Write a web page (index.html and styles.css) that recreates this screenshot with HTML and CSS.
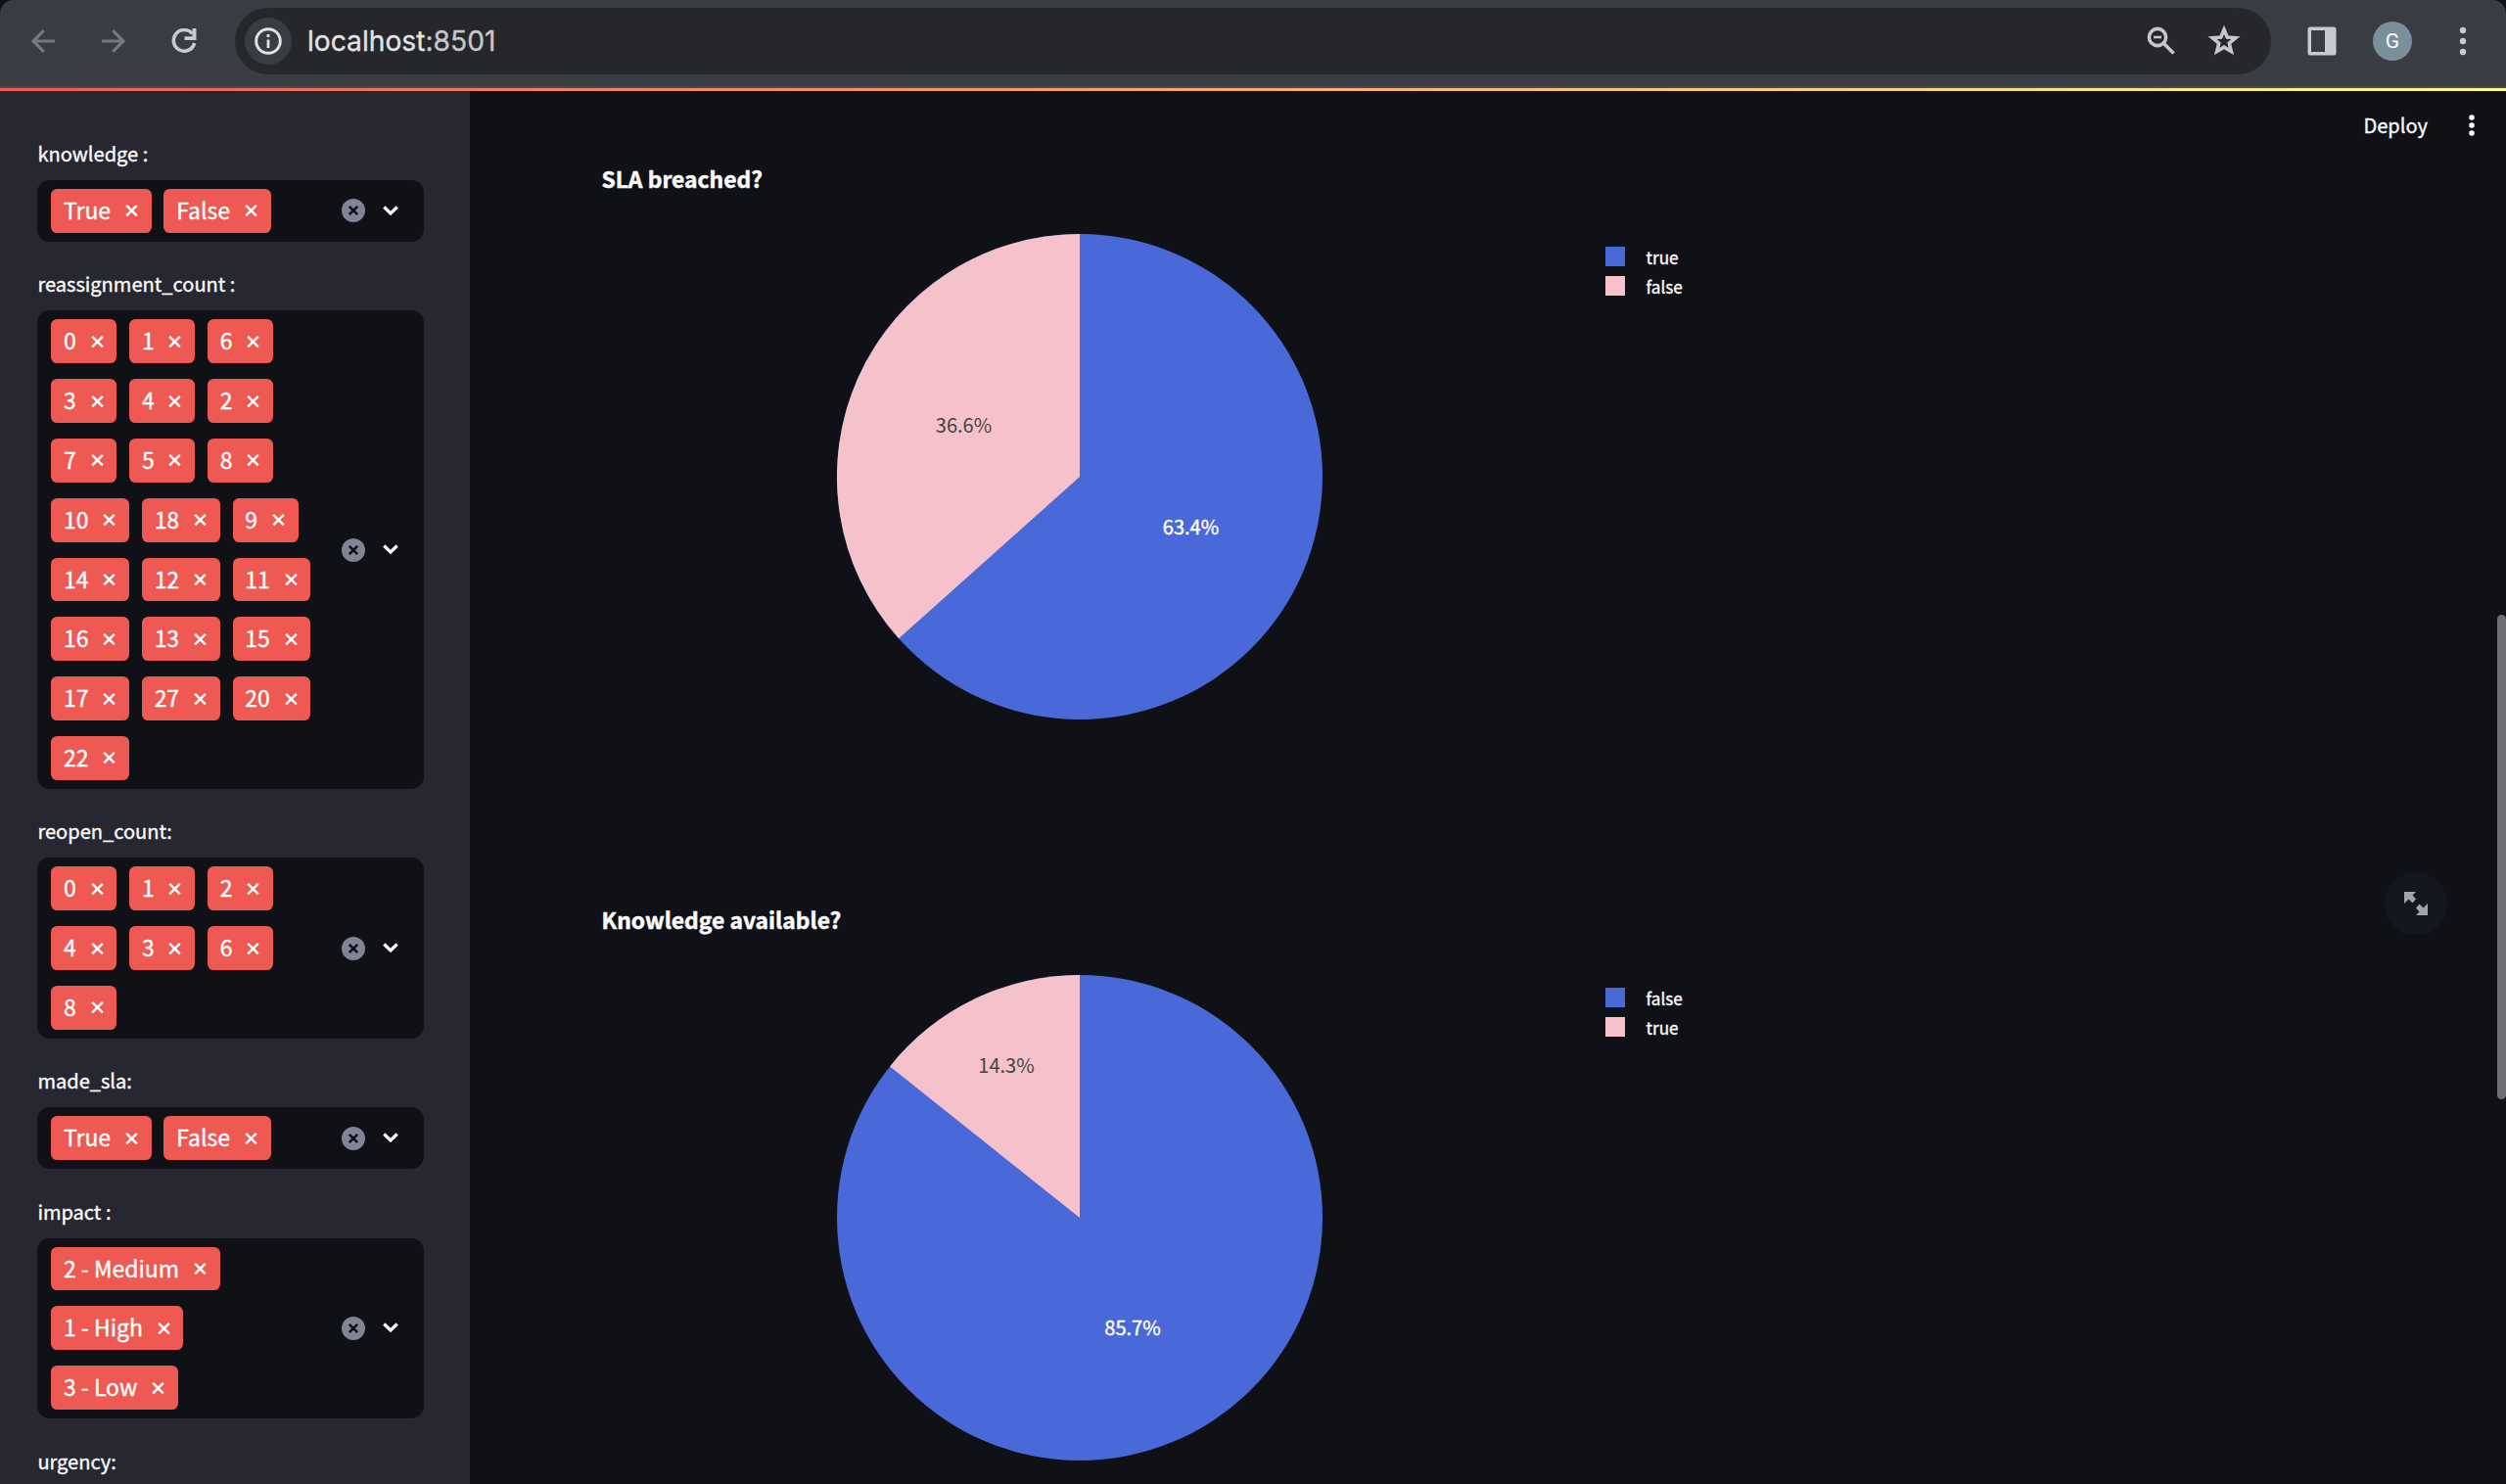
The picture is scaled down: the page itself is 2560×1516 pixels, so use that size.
FILE: index.html
```html
<!DOCTYPE html>
<html lang="en">
<head>
<meta charset="utf-8">
<title>localhost:8501</title>
<link rel="stylesheet" href="styles.css">
</head>
<body>
<svg class="defs" aria-hidden="true">
  <symbol id="x" viewBox="0 0 16 16"><path d="M3.200 2.800 13.800 13.400M13.800 2.800 3.200 13.400" fill="none" stroke="currentColor" stroke-width="2.4"/></symbol>
  <symbol id="clear" viewBox="0 0 24 24"><circle cx="12" cy="12" r="12" fill="#808495"/><path d="M7.800 7.800 16.200 16.200M16.200 7.800 7.800 16.200" stroke="#0e1117" stroke-width="2.600"/></symbol>
  <symbol id="chev" viewBox="0 0 16 10"><path d="M1.300 1.500 8 8 14.700 1.500" fill="none" stroke="#fafafa" stroke-width="3.200"/></symbol>
</svg>

<header class="browser">
  <nav class="nav">
    <svg class="nav-icon dim" viewBox="0 0 24 24"><path d="M23.500 12H2M12.300 1.200 1.500 12l10.800 10.800"/></svg>
    <svg class="nav-icon dim" viewBox="0 0 24 24"><path d="M.5 12H22M11.700 1.200 22.500 12 11.700 22.800"/></svg>
    <svg class="nav-icon reload" viewBox="0 0 26 26"><path d="M21.500 5.500A10.800 10.800 0 1 0 23.600 15"/><path class="solid" d="M25.500 0v12H13.500v-3.800h8V0z"/></svg>
  </nav>
  <div class="omnibox">
    <span class="site"><svg width="28" height="28" viewBox="0 0 28 28"><circle cx="14" cy="14" r="12.300" fill="none" stroke="#e3e3e3" stroke-width="3"/><path d="M14 12.500v8.500M14 7v3" stroke="#e3e3e3" stroke-width="2.800"/></svg></span>
    <span class="url">localhost<span class="port">:8501</span></span>
    <svg class="mag" width="30" height="30" viewBox="0 0 30 30"><circle cx="11" cy="11" r="8.600"/><path d="M17 17 27.500 27.500"/><path class="thin" d="M7 11h8"/></svg>
    <svg class="star" width="34" height="32" viewBox="0 0 34 32"><path d="M17 4.200 20.200 12l8.600.7-6.500 5.500 2 8.400L17 22.200l-7.300 4.400 2-8.400-6.500-5.500 8.600-.7z"/></svg>
  </div>
  <svg class="panel" width="30" height="30" viewBox="0 0 30 30"><path fill-rule="evenodd" d="M3 .5h24a2.500 2.500 0 0 1 2.500 2.500v24a2.500 2.500 0 0 1-2.500 2.500H3A2.500 2.500 0 0 1 .5 27V3A2.500 2.500 0 0 1 3 .5zM4 4v22h14V4z" fill="#c7c9d3"/></svg>
  <span class="avatar">G</span>
  <svg class="menu" width="8" height="30" viewBox="0 0 8 30"><g fill="#c7c9d3"><circle cx="4" cy="4" r="3.200"/><circle cx="4" cy="15" r="3.200"/><circle cx="4" cy="26" r="3.200"/></g></svg>
</header>
<div class="decoration"></div>

<div class="app">
  <aside class="sidebar" id="sidebar"></aside>
  <main class="main">
    <div class="toolbar">
      <span>Deploy</span>
      <svg width="6" height="24" viewBox="0 0 6 24"><g fill="#fafafa"><circle cx="3" cy="4" r="2.800"/><circle cx="3" cy="12" r="2.800"/><circle cx="3" cy="20" r="2.800"/></g></svg>
    </div>
    <section class="chart">
      <h2>SLA breached?</h2>
      <svg class="pie" viewBox="-248 -248 496 496">
        <circle r="248" fill="#4a69d9"/>
        <path d="M0 0V-248A248 248 0 0 0 -184.900 165.300z" fill="#f5c2cb"/>
        <text class="on-pink" x="-118.500" y="-45">36.6%</text>
        <text class="on-blue" x="113.500" y="59">63.4%</text>
      </svg>
      <ul class="legend"><li class="blue">true</li><li class="pink">false</li></ul>
    </section>
    <section class="chart">
      <h2>Knowledge available?</h2>
      <svg class="pie" viewBox="-248 -248 496 496">
        <circle r="248" fill="#4a69d9"/>
        <path d="M0 0V-248A248 248 0 0 0 -193.900 -154.600z" fill="#f5c2cb"/>
        <text class="on-pink" x="-75" y="-148">14.3%</text>
        <text class="on-blue" x="54" y="120">85.7%</text>
      </svg>
      <ul class="legend"><li class="blue">false</li><li class="pink">true</li></ul>
    </section>
    <span class="fullscreen"><svg width="24" height="24" viewBox="0 0 24 24"><path d="M0 0H12L8.500 3.500 12 7.500 8.500 11.500 4.500 7.500 0 12zM24 24H12l3.500-3.500L12 16.500l3.500-4 4 4L24 12z" fill="#a3a4a8"/></svg></span>
  </main>
</div>
<div class="scrollbar"></div>
<script src="app.js"></script>
</body>
</html>
```
FILE: styles.css
```css
* { box-sizing: border-box; }
body {
  margin: 0;
  width: 2560px;
  height: 1516px;
  overflow: hidden;
  background: #0f1116;
  color: #fafafa;
  font-family: "Noto Sans CJK SC", "Noto Sans", sans-serif;
  font-weight: 400;
  -webkit-text-stroke: 0.35px currentColor;
  display: flex;
  flex-direction: column;
}
.defs { display: none; }

.browser {
  height: 90px;
  flex: none;
  background: #393c43;
  border-bottom: 2px solid #47494b;
  border-radius: 14px 14px 0 0;
  display: flex;
  align-items: flex-start;
  padding: 8px 31px 0 32px;
}
.nav { display: flex; gap: 46px; height: 68px; align-items: center; width: 208px; flex: none; }
.nav-icon { width: 25px; height: 24px; fill: none; stroke: #c7c9d3; stroke-width: 3.2; flex: none; }
.nav-icon.dim { stroke: #77787d; }
.nav-icon.reload { width: 26px; height: 26px; stroke-width: 3.6; margin-left: 1px; }
.nav-icon .solid { fill: #c7c9d3; stroke: none; }
.omnibox {
  width: 2080px;
  height: 68px;
  border-radius: 34px;
  background: #25272b;
  display: flex;
  align-items: center;
  padding: 0 31px 0 10px;
  flex: none;
}
.site { width: 48px; height: 48px; border-radius: 50%; background: #393c43; display: grid; place-items: center; }
.url { font: 400 28.2px "Inter", sans-serif; color: #e3e3e3; margin-left: 16px; flex: 1; }
.port { color: #c7c7c7; }
.mag, .star { fill: none; stroke: #c7c7c7; stroke-width: 3.6; }
.mag .thin { stroke-width: 2.6; }
.star { margin-left: 32px; }
.panel { margin: 19px 0 0 37px; }
.avatar {
  width: 40px; height: 40px; margin: 14px 0 0 37px; border-radius: 50%;
  background: #7a8f9a; color: #fff; display: grid; place-items: center;
  font: 400 21px Roboto, sans-serif;
  -webkit-text-stroke: 0;
}
.menu { margin: 19px 0 0 48px; }
.decoration { height: 3px; flex: none; background: linear-gradient(90deg, #ee5a53, #fffc84); }

.app { display: flex; flex: 1; min-height: 0; }
.sidebar {
  width: 480px; flex: none; background: #262730;
  padding: 46.1px 46.8px 0 38.4px;
  display: flex; flex-direction: column; gap: 25.6px;
  overflow: hidden;
}
.field { flex: none; }
.label { height: 44.8px; font-size: 20.06px; line-height: 36px; white-space: pre; }
.field:last-child .label { height: 36px; }
.select {
  display: flex; align-items: center;
  background: #0f1116; border-radius: 12.8px; padding: 1.1px 26px 1.1px 13.8px;
}
.chips { display: flex; flex-wrap: wrap; flex: 1; column-gap: 12.8px; }
.chip {
  height: 44.8px; margin: 8px 0; padding: 0 12.8px; border-radius: 6.4px;
  background: #ee5a53; color: #fff; font-size: 22.95px; line-height: 43px;
  display: flex; align-items: flex-start; white-space: pre;
}
.chip svg { width: 16px; height: 16px; margin: 14.4px 0 0 12.8px; }
.clear { width: 24px; height: 24px; margin-left: 24px; }
.chev { width: 16px; height: 10px; margin: -1px 0 0 18px; }

.main { flex: 1; position: relative; padding-left: 134.5px; display: flex; flex-direction: column; overflow: hidden; }
.toolbar { height: 70px; flex: none; display: flex; justify-content: flex-end; align-items: center; gap: 42px; padding-right: 32px; font-size: 20.06px; line-height: 28px; }
.chart { height: 757px; flex: none; display: grid; grid-template-columns: 240.5px 496px 289px 1fr; grid-template-rows: 76px 496px; align-items: start; }
.chart:nth-of-type(2) { height: 596px; }
.chart h2 { grid-column: 1 / -1; margin: 0; font-size: 22.85px; line-height: 38px; font-weight: 700; -webkit-text-stroke: 0.5px currentColor; }
.pie { grid-column: 2; width: 496px; height: 496px; display: block; }
.pie text { font-size: 20.06px; text-anchor: middle; }
.on-pink { fill: #444; -webkit-text-stroke: 0; }
.on-blue { fill: #fff; stroke: #fff; stroke-width: 0.35px; }
.legend { grid-column: 4; list-style: none; margin: 8px 0 0; padding: 0; font-size: 17.2px; }
.legend li { height: 30px; display: flex; align-items: center; gap: 22px; }
.legend li::before { content: ""; width: 19.5px; height: 19.5px; }
.legend .blue::before { background: #4a69d9; }
.legend .pink::before { background: #f5c2cb; }
.fullscreen {
  position: absolute; left: 1956px; top: 798px; width: 64px; height: 64px;
  border-radius: 50%; background: #131720; display: grid; place-items: center;
}
.fullscreen svg { margin: -1px 0 0 -1px; }
.scrollbar { position: absolute; left: 2551px; top: 628px; width: 9px; height: 495px; border-radius: 5px; background: #6e6f73; }
```
FILE: app.js
```js
const fields = [
  ["knowledge :", ["True", "False"]],
  ["reassignment_count :", [0, 1, 6, 3, 4, 2, 7, 5, 8, 10, 18, 9, 14, 12, 11, 16, 13, 15, 17, 27, 20, 22]],
  ["reopen_count:", [0, 1, 2, 4, 3, 6, 8]],
  ["made_sla:", ["True", "False"]],
  ["impact :", ["2 - Medium", "1 - High", "3 - Low"]],
  ["urgency:", []],
];
const icon = (id, cls) => `<svg class="${cls}"><use href="#${id}"/></svg>`;
const select = values => `
    <div class="select">
      <div class="chips">${values.map(v => `<span class="chip">${v}${icon("x", "cross")}</span>`).join("")}</div>
      ${icon("clear", "clear")}${icon("chev", "chev")}
    </div>`;
document.getElementById("sidebar").innerHTML = fields.map(([label, values]) => `
  <div class="field">
    <div class="label">${label}</div>${values.length ? select(values) : ""}
  </div>`).join("");
```
